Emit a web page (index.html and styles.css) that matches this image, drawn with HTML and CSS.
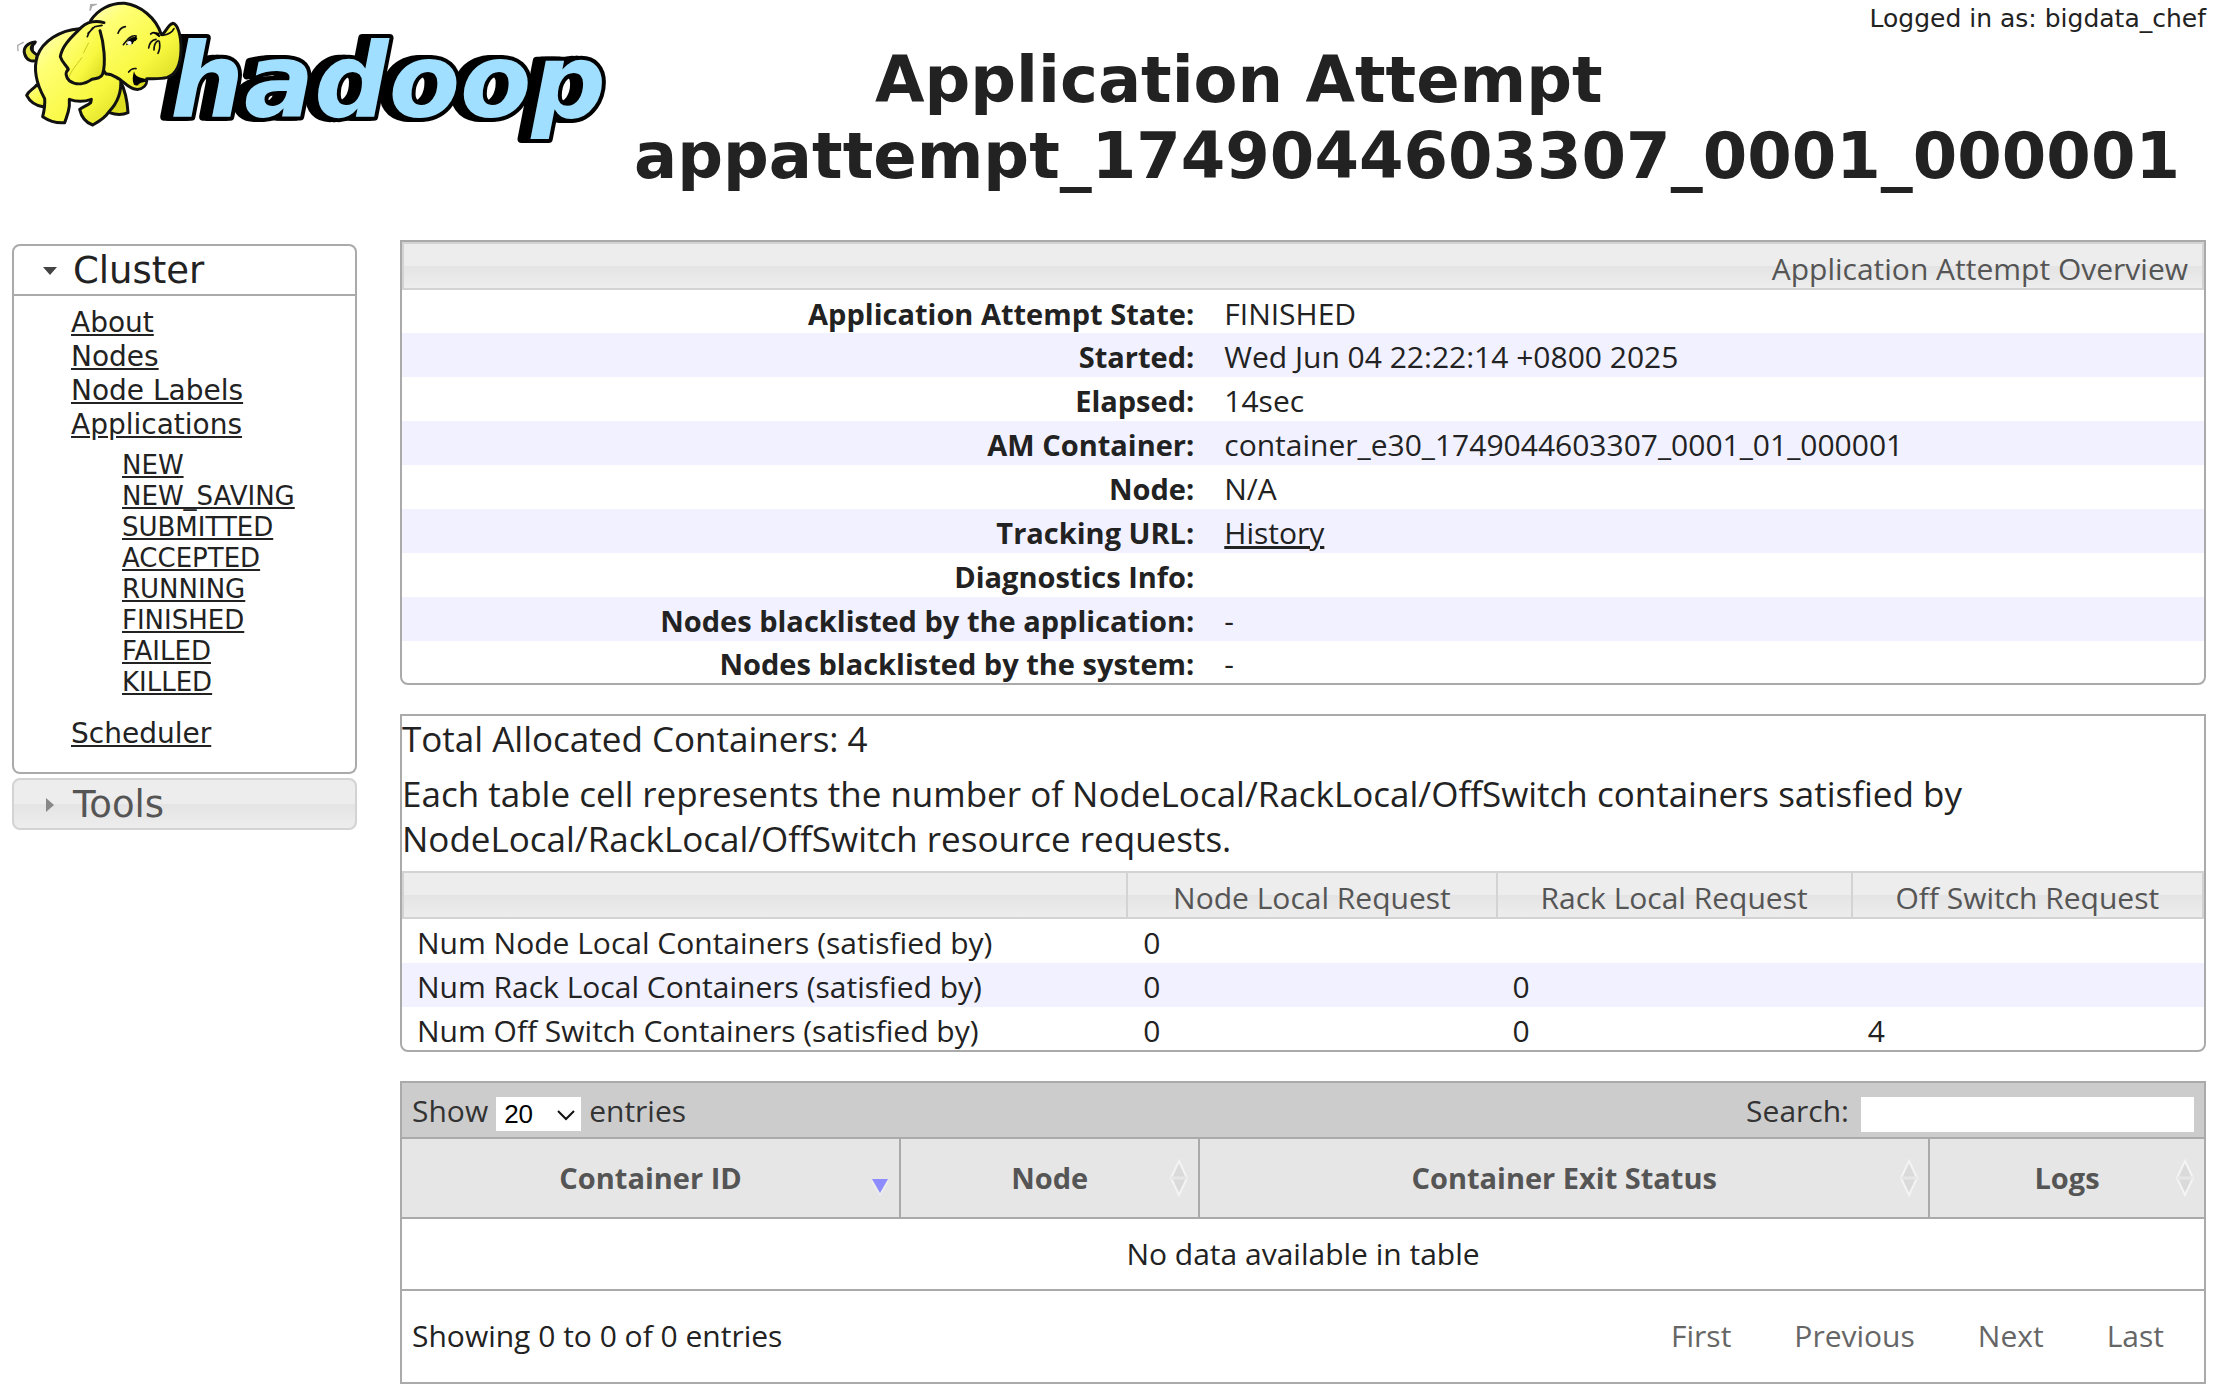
FILE: index.html
```html
<!DOCTYPE html>
<html lang="en">
<head>
<meta charset="utf-8">
<title>Application Attempt appattempt_1749044603307_0001_000001</title>
<link rel="stylesheet" href="styles.css">
</head>
<body>
<header class="page-header">
  <div class="user">Logged in as: bigdata_chef</div>
  <div class="logo">
    <svg width="608" height="150" viewBox="0 0 608 150" role="img" aria-label="hadoop">
      <defs>
        <linearGradient id="hide" x1="0" y1="0" x2="1" y2="1">
          <stop offset="0" stop-color="#ffffc8"/>
          <stop offset="0.25" stop-color="#ffff74"/>
          <stop offset="0.65" stop-color="#f8f840"/>
          <stop offset="1" stop-color="#d2d21c"/>
        </linearGradient>
      </defs>
      <text class="wordmark" x="170" y="117">hadoop</text>
      <svg width="200" height="130" viewBox="0 0 600 390">
        <g fill="url(#hide)" stroke="#111" stroke-width="9" stroke-linejoin="round" stroke-linecap="round">
          <path d="M112 166C104 158 92 156 94 142C95 134 104 134 106 126C82 128 68 144 74 162C79 180 96 188 110 180Z" fill="#e4e440"/>
          <path d="M110 255C100 268 86 272 80 286C90 306 110 318 132 321L150 280Z"/>
          <path d="M360 240C372 264 382 300 384 338C366 346 346 344 328 338L322 290Z" fill="#dcdc20"/>
          <path d="M238 86C180 90 128 124 112 168C100 206 106 246 134 296C136 316 132 334 128 350C146 362 172 370 194 368C200 350 206 338 208 318L208 298C230 306 252 306 274 298L272 308C264 316 248 320 239 328C244 350 258 368 278 375C294 366 316 354 326 336C350 312 366 280 362 236L400 100Z"/>
          <path d="M272 62C292 30 330 8 374 10C420 16 468 52 484 104C500 98 500 76 518 70C534 72 544 110 543 150C542 190 530 222 502 232C480 238 460 236 440 236C442 256 426 270 408 268C388 266 376 250 360 238C346 232 336 220 318 222L258 130Z"/>
          <path d="M312 68C290 62 266 62 244 82C216 110 186 136 181 170C186 188 200 196 205 208C194 218 198 232 208 242C230 258 256 252 276 238C290 236 304 234 308 222C318 190 312 130 300 92"/>
        </g>
        <g fill="none" stroke="#111" stroke-width="5" stroke-linecap="round">
          <path d="M264 100L284 80L306 76M278 84L266 100L262 110M354 100C358 88 364 82 376 80M370 134C384 116 394 104 408 108L406 120M452 102C460 96 470 98 478 108M446 144C448 128 456 120 468 118M462 150C462 136 466 126 474 122M474 160C480 148 480 134 478 124M488 106C502 104 516 98 522 86M386 216C392 208 398 204 408 206M100 130C102 144 92 152 104 160"/>
          <path d="M270 32L272 14L290 13L276 17ZM54 152L53 136L70 127" stroke="#aaa" stroke-width="4"/>
        </g>
        <path d="M378 136C384 114 400 106 412 114C412 122 402 120 398 132Z M456 96L478 98L478 112Z M402 214C406 232 420 232 438 238C434 252 420 262 402 254C396 242 398 228 402 214Z" fill="#000"/>
        <ellipse cx="388" cy="129" rx="7" ry="6" fill="#fff"/>
        <path d="M412 258C418 248 428 246 436 246C434 256 424 264 412 258Z" fill="#d8d820"/>
        <path d="M246 172C226 200 212 214 208 230M250 160L266 128" fill="none" stroke="#c9c91c" stroke-width="3"/>
      </svg>
    </svg>
  </div>
  <h1 class="title">Application Attempt appattempt_1749044603307_0001_000001</h1>
</header>

<div class="layout">
  <nav class="nav">
    <section class="group">
      <button class="group-head open" type="button" aria-expanded="true">
        <svg class="caret" width="16" height="16" viewBox="0 0 16 16"><path d="M1 4H15L8 12Z" fill="#444"/></svg>Cluster
      </button>
      <div class="group-body">
        <ul class="links">
          <li><a href="#about">About</a></li>
          <li><a href="#nodes">Nodes</a></li>
          <li><a href="#labels">Node Labels</a></li>
          <li><a href="#apps">Applications</a>
            <ul class="states">
              <li><a href="#NEW">NEW</a></li>
              <li><a href="#NEW_SAVING">NEW_SAVING</a></li>
              <li><a href="#SUBMITTED">SUBMITTED</a></li>
              <li><a href="#ACCEPTED">ACCEPTED</a></li>
              <li><a href="#RUNNING">RUNNING</a></li>
              <li><a href="#FINISHED">FINISHED</a></li>
              <li><a href="#FAILED">FAILED</a></li>
              <li><a href="#KILLED">KILLED</a></li>
            </ul>
          </li>
          <li><a href="#scheduler">Scheduler</a></li>
        </ul>
      </div>
    </section>
    <section class="group">
      <button class="group-head closed" type="button" aria-expanded="false">
        <svg class="caret" width="16" height="16" viewBox="0 0 16 16"><path d="M4 1L12 8L4 15Z" fill="#888"/></svg>Tools
      </button>
    </section>
  </nav>

  <main class="content">
    <section class="panel rounded">
      <table class="grid overview">
        <colgroup><col class="names"><col></colgroup>
        <thead>
          <tr><th colspan="2" class="caption">Application Attempt Overview</th></tr>
        </thead>
        <tbody>
          <tr><th scope="row">Application Attempt State:</th><td>FINISHED</td></tr>
          <tr><th scope="row">Started:</th><td>Wed Jun 04 22:22:14 +0800 2025</td></tr>
          <tr><th scope="row">Elapsed:</th><td>14sec</td></tr>
          <tr><th scope="row">AM Container:</th><td>container_e30_1749044603307_0001_01_000001</td></tr>
          <tr><th scope="row">Node:</th><td>N/A</td></tr>
          <tr><th scope="row">Tracking URL:</th><td><a href="#history">History</a></td></tr>
          <tr><th scope="row">Diagnostics Info:</th><td></td></tr>
          <tr><th scope="row">Nodes blacklisted by the application:</th><td>-</td></tr>
          <tr><th scope="row">Nodes blacklisted by the system:</th><td>-</td></tr>
        </tbody>
      </table>
    </section>

    <section class="panel rounded">
      <div class="note">Total Allocated Containers: 4</div>
      <p class="note spaced">Each table cell represents the number of NodeLocal/RackLocal/OffSwitch containers satisfied by NodeLocal/RackLocal/OffSwitch resource requests.</p>
      <table class="grid requests">
        <thead>
          <tr><th></th><th>Node Local Request</th><th>Rack Local Request</th><th>Off Switch Request</th></tr>
        </thead>
        <tbody>
          <tr><td>Num Node Local Containers (satisfied by)</td><td>0</td><td></td><td></td></tr>
          <tr><td>Num Rack Local Containers (satisfied by)</td><td>0</td><td>0</td><td></td></tr>
          <tr><td>Num Off Switch Containers (satisfied by)</td><td>0</td><td>0</td><td>4</td></tr>
        </tbody>
      </table>
    </section>

    <section class="panel">
      <div class="toolbar">
        <label class="length">Show
          <span class="select">
            <select><option>20</option><option>40</option><option>60</option></select>
            <svg width="18" height="12" viewBox="0 0 18 12"><path d="M1 2L9 10L17 2" fill="none" stroke="#111" stroke-width="2"/></svg>
          </span>
          entries</label>
        <label class="search">Search: <input type="text"></label>
      </div>
      <table class="data">
        <thead>
          <tr>
            <th>Container ID<svg class="sort" width="18" height="38" viewBox="0 0 18 38"><path d="M1 20H17L9 34Z" fill="#8c8cff"/><path d="M1 22L9 36L17 22" fill="none" stroke="#f2f2f2"/></svg></th>
            <th>Node<svg class="sort" width="18" height="38" viewBox="0 0 18 38"><path d="M9 2L17 19L9 36L1 19Z" fill="#dadada" stroke="#f4f4f4" stroke-width="2"/><path d="M1 19H17" stroke="#e6e6e6" stroke-width="3"/></svg></th>
            <th>Container Exit Status<svg class="sort" width="18" height="38" viewBox="0 0 18 38"><path d="M9 2L17 19L9 36L1 19Z" fill="#dadada" stroke="#f4f4f4" stroke-width="2"/><path d="M1 19H17" stroke="#e6e6e6" stroke-width="3"/></svg></th>
            <th>Logs<svg class="sort" width="18" height="38" viewBox="0 0 18 38"><path d="M9 2L17 19L9 36L1 19Z" fill="#dadada" stroke="#f4f4f4" stroke-width="2"/><path d="M1 19H17" stroke="#e6e6e6" stroke-width="3"/></svg></th>
          </tr>
        </thead>
        <tbody>
          <tr><td colspan="4">No data available in table</td></tr>
        </tbody>
      </table>
      <div class="footer">
        <span>Showing 0 to 0 of 0 entries</span>
        <div class="pager">
          <button type="button">First</button>
          <button type="button">Previous</button>
          <button type="button">Next</button>
          <button type="button">Last</button>
        </div>
      </div>
    </section>
  </main>
</div>
</body>
</html>
```
FILE: styles.css
```css
* { box-sizing: border-box; }

body {
  margin: 0;
  padding: 0 14px 14px 12px;
  background: #fff;
  color: #222;
  font-family: "DejaVu Sans", Verdana, sans-serif;
  font-size: 28px;
}

a { color: #222; }

button {
  font: inherit;
  color: inherit;
  background: none;
  border: 0;
  padding: 0;
  cursor: pointer;
}

/* Header: both floats shape the lines of the centred title */
.page-header { height: 240px; }
.user { float: right; height: 60px; padding-top: 4px; font-size: 25px; line-height: 29px; }
.logo { float: left; height: 150px; margin-left: -12px; }
.logo svg { display: block; overflow: visible; }
.wordmark {
  font: italic bold 104px "DejaVu Sans", Verdana, sans-serif;
  fill: #a0dfff;
  stroke: #000;
  stroke-width: 8px;
  stroke-linejoin: round;
  paint-order: stroke;
  filter: drop-shadow(-4px 0 0 #000) drop-shadow(-5px 0 0 #000);
}
.title { margin: 0; padding-top: 42px; font-size: 64px; line-height: 76px; text-align: center; }

.layout { display: grid; grid-template-columns: 345px minmax(0, 1fr); column-gap: 43px; align-items: start; }

/* Sidebar */
.nav { display: grid; gap: 4px; margin-top: 4px; }
.group-head {
  display: flex;
  align-items: center;
  gap: 15px;
  width: 100%;
  height: 52px;
  padding: 2px 28px 0;
  border: 2px solid #aaa;
  border-radius: 8px 8px 0 0;
  font-size: 37px;
  line-height: 46px;
}
.closed {
  border-color: #d3d3d3;
  border-radius: 8px;
  color: #555;
  background: linear-gradient(#ededed 50%, #e4e4e4 50%, #ededed);
}
.group-body { padding: 10px 20px 21px 57px; border: 2px solid #aaa; border-top: 0; border-radius: 0 0 8px 8px; }
.links, .states { list-style: none; margin: 0; padding: 0; }
.links { line-height: 34px; }
.states { margin: 8px 0 19px; padding-left: 51px; font-size: 26px; line-height: 31px; }

/* Panels */
.content { display: grid; gap: 29px; font-family: "Open Sans", "Segoe UI", sans-serif; font-size: 30px; }
.panel { border: 2px solid #aaa; overflow: hidden; }
.rounded { border-radius: 0 0 8px 8px; }

table { width: 100%; table-layout: fixed; border-collapse: separate; border-spacing: 0; }
.grid th, .grid td { height: 44px; padding: 4px 15px 0; line-height: 38px; text-align: left; white-space: nowrap; }
.grid tbody th, .data th { font-size: 29px; }
.grid tbody tr:nth-child(even) { background: #f1f1ff; }
.grid tbody tr:last-child > * { height: 43px; }
.overview tbody tr:first-child > * { height: 43px; }
.overview tbody tr:last-child > * { height: 42px; }
.grid thead th {
  height: 48px;
  padding: 5px 14px 0;
  border: solid #d3d3d3;
  border-width: 2px 2px 2px 0;
  font-weight: 400;
  color: #555;
  text-align: center;
  background: linear-gradient(#ededed 50%, #e4e4e4 50%, #ededed);
}
.grid thead th:first-child { border-left-width: 2px; }
.grid thead th.caption { text-align: right; }
.overview tbody th { text-align: right; }
.overview .names { width: 44.8%; }
.requests th:nth-child(1) { width: 40.3%; }
.requests th:nth-child(2) { width: 20.5%; }
.requests th:nth-child(4) { width: 19.5%; }

.note { margin: 0; font-size: 35px; line-height: 45px; }
.spaced { margin: 10px 0; }

/* Data table */
.toolbar {
  display: flex;
  justify-content: space-between;
  height: 56px;
  padding: 11px 10px 0;
  border-bottom: 2px solid #aaa;
  color: #333;
  background: #ccc;
  line-height: 34px;
}
.toolbar label { display: flex; gap: 8px; }
.toolbar .search { gap: 12px; }
.select { position: relative; display: block; margin-top: 3px; }
.select select {
  appearance: none;
  display: block;
  width: 85px;
  height: 34px;
  padding: 0 8px;
  border: 0;
  border-radius: 0;
  background: #fff;
  color: #000;
  font: 26px "Liberation Sans", Arial, sans-serif;
}
.select svg { position: absolute; right: 6px; top: 12px; pointer-events: none; }
.search input { width: 333px; height: 35px; margin: 3px 0 0; padding: 0 4px; border: 0; font: inherit; }

.data th {
  position: relative;
  height: 80px;
  padding: 0 20px 2px;
  border: solid #aaa;
  border-width: 0 2px 2px 0;
  background: #e6e6e6;
  color: #555;
}
.data th:last-child { border-right: 0; }
.data th:nth-child(1) { width: 27.7%; }
.data th:nth-child(2) { width: 16.6%; }
.data th:nth-child(4) { width: 15.2%; }
.sort { position: absolute; right: 10px; top: 20px; }
.data td { height: 72px; padding: 0 0 2px; border-bottom: 2px solid #aaa; text-align: center; }
.footer { display: flex; justify-content: space-between; align-items: center; height: 91px; padding: 0 40px 2px 10px; }
.pager { display: flex; gap: 63px; color: #666; }
```
